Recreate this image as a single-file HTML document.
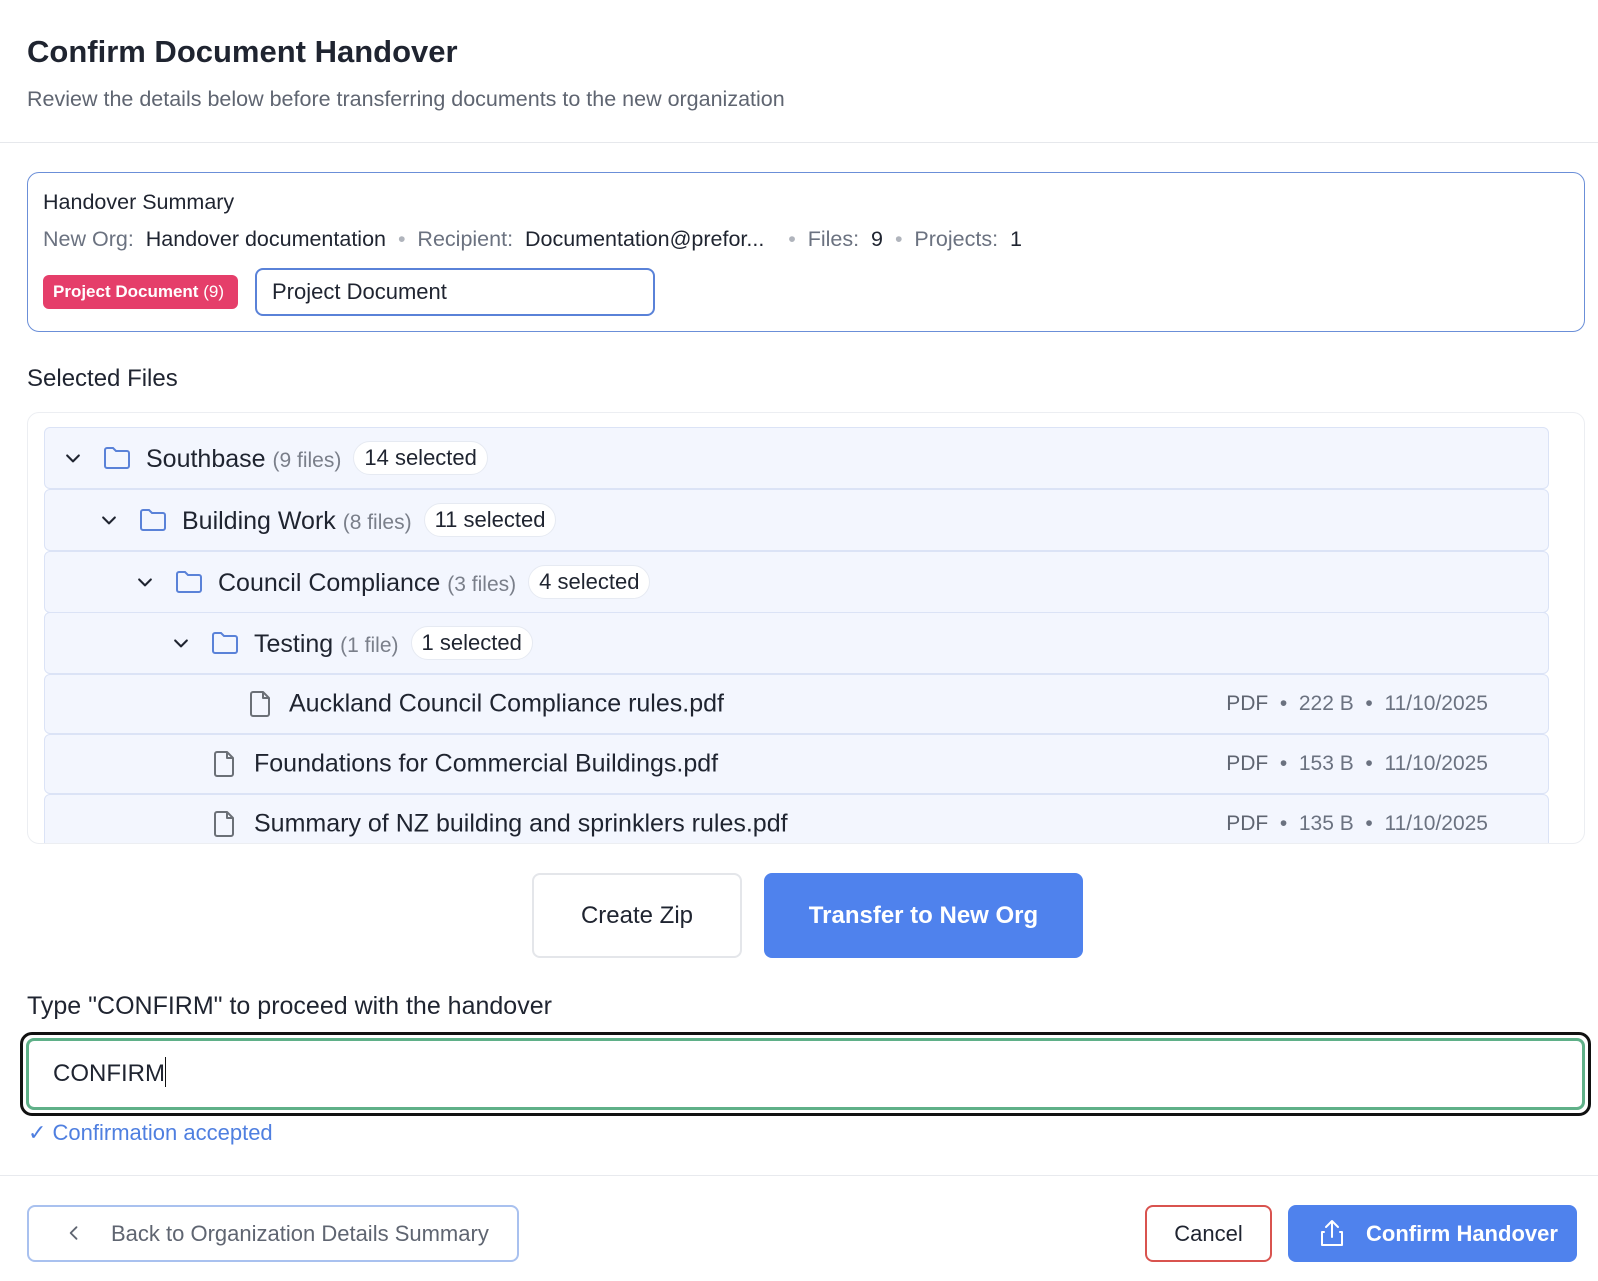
<!DOCTYPE html>
<html><head><meta charset="utf-8"><style>
*{box-sizing:border-box;margin:0;padding:0}
body{width:1598px;height:1281px;background:#fff;font-family:"Liberation Sans",sans-serif;color:#1f2430;position:relative;overflow:hidden}
.a{position:absolute;white-space:nowrap}
.row{position:absolute;left:44px;width:1505px;background:#f3f6fe;border:1px solid #dbe3f6;border-radius:6px}
.row .t{position:absolute;top:50%;transform:translateY(-50%);font-size:25px;white-space:nowrap;color:#1f2430}
.g{color:#7a7f8a;font-size:21px}
.pill{display:inline-block;background:#fff;border:1px solid #e6eaf2;border-radius:18px;padding:3px 10px;font-size:22px;margin-left:12px;color:#1f2430;vertical-align:2px}
.meta{position:absolute;right:60px;top:50%;transform:translateY(-50%);color:#6b7280;font-size:21px}
.ic{position:absolute;top:50%;transform:translateY(-50%)}
</style></head><body>
<div class="a" style="left:27px;top:34px;font-size:31px;font-weight:bold;color:#1f2430">Confirm Document Handover</div>
<div class="a" style="left:27px;top:87px;font-size:21.5px;color:#5f6571">Review the details below before transferring documents to the new organization</div>
<div class="a" style="left:0;top:142px;width:1598px;height:1px;background:#e6e8ec"></div>

<div class="a" style="left:27px;top:172px;width:1558px;height:160px;border:1.5px solid #6b8fd8;border-radius:12px"></div>
<div class="a" style="left:43px;top:190px;font-size:21.5px">Handover Summary</div>
<div class="a" style="left:43px;top:227px;font-size:21.5px;color:#6b7280">New Org:&nbsp; <span style="color:#1f2430">Handover documentation</span> &nbsp;<span style="color:#b0b4bc">•</span>&nbsp; Recipient:&nbsp; <span style="color:#1f2430">Documentation@prefor...</span> &nbsp;&nbsp;&nbsp;<span style="color:#b0b4bc">•</span>&nbsp; Files:&nbsp; <span style="color:#1f2430">9</span> &nbsp;<span style="color:#b0b4bc">•</span>&nbsp; Projects:&nbsp; <span style="color:#1f2430">1</span></div>
<div class="a" style="left:43px;top:275px;width:195px;height:34px;background:#e53e6a;border-radius:6px;color:#fff;font-size:17px;font-weight:bold;line-height:34px;padding-left:10px">Project Document <span style="font-weight:normal">(9)</span></div>
<div class="a" style="left:255px;top:268px;width:400px;height:48px;border:2.5px solid #5a82d8;border-radius:8px;font-size:22px;line-height:43px;padding-left:15px">Project Document</div>

<div class="a" style="left:27px;top:365px;font-size:24px">Selected Files</div>
<div class="a" style="left:27px;top:412px;width:1558px;height:432px;border:1px solid #eceef2;border-radius:12px;overflow:hidden">
</div>
<div class="a" style="left:28px;top:413px;width:1556px;height:430px;overflow:hidden;border-radius:12px">
<div style="position:relative;left:-28px;top:-413px">
<div class="row" style="top:427px;height:62px">
 <svg class="ic" style="left:18px" width="20" height="20" viewBox="0 0 24 24" fill="none" stroke="#1f2430" stroke-width="2.5" stroke-linecap="round" stroke-linejoin="round"><path d="M5 9l7 7 7-7"/></svg>
 <svg class="ic" style="left:58px" width="28" height="24" viewBox="0 0 28 24" fill="none" stroke="#5a82d8" stroke-width="2"><path d="M2 4a2 2 0 0 1 2-2h6l3 3h11a2 2 0 0 1 2 2v13a2 2 0 0 1-2 2H4a2 2 0 0 1-2-2z"/></svg>
 <div class="t" style="left:101px">Southbase <span class="g">(9 files)</span><span class="pill">14 selected</span></div>
</div>
<div class="row" style="top:489px;height:62px">
 <svg class="ic" style="left:54px" width="20" height="20" viewBox="0 0 24 24" fill="none" stroke="#1f2430" stroke-width="2.5" stroke-linecap="round" stroke-linejoin="round"><path d="M5 9l7 7 7-7"/></svg>
 <svg class="ic" style="left:94px" width="28" height="24" viewBox="0 0 28 24" fill="none" stroke="#5a82d8" stroke-width="2"><path d="M2 4a2 2 0 0 1 2-2h6l3 3h11a2 2 0 0 1 2 2v13a2 2 0 0 1-2 2H4a2 2 0 0 1-2-2z"/></svg>
 <div class="t" style="left:137px">Building Work <span class="g">(8 files)</span><span class="pill">11 selected</span></div>
</div>
<div class="row" style="top:551px;height:62px">
 <svg class="ic" style="left:90px" width="20" height="20" viewBox="0 0 24 24" fill="none" stroke="#1f2430" stroke-width="2.5" stroke-linecap="round" stroke-linejoin="round"><path d="M5 9l7 7 7-7"/></svg>
 <svg class="ic" style="left:130px" width="28" height="24" viewBox="0 0 28 24" fill="none" stroke="#5a82d8" stroke-width="2"><path d="M2 4a2 2 0 0 1 2-2h6l3 3h11a2 2 0 0 1 2 2v13a2 2 0 0 1-2 2H4a2 2 0 0 1-2-2z"/></svg>
 <div class="t" style="left:173px">Council Compliance <span class="g">(3 files)</span><span class="pill">4 selected</span></div>
</div>
<div class="row" style="top:612px;height:62px">
 <svg class="ic" style="left:126px" width="20" height="20" viewBox="0 0 24 24" fill="none" stroke="#1f2430" stroke-width="2.5" stroke-linecap="round" stroke-linejoin="round"><path d="M5 9l7 7 7-7"/></svg>
 <svg class="ic" style="left:166px" width="28" height="24" viewBox="0 0 28 24" fill="none" stroke="#5a82d8" stroke-width="2"><path d="M2 4a2 2 0 0 1 2-2h6l3 3h11a2 2 0 0 1 2 2v13a2 2 0 0 1-2 2H4a2 2 0 0 1-2-2z"/></svg>
 <div class="t" style="left:209px">Testing <span class="g">(1 file)</span><span class="pill">1 selected</span></div>
</div>
<div class="row" style="top:674px;height:60px">
 <svg class="ic" style="left:205px" width="22" height="26" viewBox="0 0 22 26" fill="none" stroke="#6b7077" stroke-width="2" stroke-linejoin="round"><path d="M3 1h10l6 6v16a2 2 0 0 1-2 2H3a2 2 0 0 1-2-2V3a2 2 0 0 1 2-2z"/><path d="M13 1v6h6"/></svg>
 <div class="t" style="left:244px">Auckland Council Compliance rules.pdf</div>
 <div class="meta"><b style="font-weight:normal;color:#5f6571">PDF</b> &nbsp;•&nbsp; 222 B &nbsp;•&nbsp; 11/10/2025</div>
</div>
<div class="row" style="top:734px;height:60px">
 <svg class="ic" style="left:169px" width="22" height="26" viewBox="0 0 22 26" fill="none" stroke="#6b7077" stroke-width="2" stroke-linejoin="round"><path d="M3 1h10l6 6v16a2 2 0 0 1-2 2H3a2 2 0 0 1-2-2V3a2 2 0 0 1 2-2z"/><path d="M13 1v6h6"/></svg>
 <div class="t" style="left:209px">Foundations for Commercial Buildings.pdf</div>
 <div class="meta"><b style="font-weight:normal;color:#5f6571">PDF</b> &nbsp;•&nbsp; 153 B &nbsp;•&nbsp; 11/10/2025</div>
</div>
<div class="row" style="top:794px;height:60px">
 <svg class="ic" style="left:169px" width="22" height="26" viewBox="0 0 22 26" fill="none" stroke="#6b7077" stroke-width="2" stroke-linejoin="round"><path d="M3 1h10l6 6v16a2 2 0 0 1-2 2H3a2 2 0 0 1-2-2V3a2 2 0 0 1 2-2z"/><path d="M13 1v6h6"/></svg>
 <div class="t" style="left:209px">Summary of NZ building and sprinklers rules.pdf</div>
 <div class="meta"><b style="font-weight:normal;color:#5f6571">PDF</b> &nbsp;•&nbsp; 135 B &nbsp;•&nbsp; 11/10/2025</div>
</div>
</div></div>

<div class="a" style="left:532px;top:873px;width:210px;height:85px;border:2px solid #e4e6ea;border-radius:8px;font-size:24px;text-align:center;line-height:81px">Create Zip</div>
<div class="a" style="left:764px;top:873px;width:319px;height:85px;background:#4f82ed;border-radius:8px;font-size:24px;font-weight:bold;color:#fff;text-align:center;line-height:85px">Transfer to New Org</div>

<div class="a" style="left:27px;top:992px;font-size:25px">Type "CONFIRM" to proceed with the handover</div>
<div class="a" style="left:20px;top:1032px;width:1571px;height:84px;border:3px solid #111;border-radius:12px"></div>
<div class="a" style="left:26px;top:1038px;width:1559px;height:72px;border:3px solid #5fb088;border-radius:8px;font-size:24px;line-height:66px;padding-left:24px">CONFIRM<span style="display:inline-block;width:1.5px;height:30px;background:#111;vertical-align:-6px"></span></div>
<div class="a" style="left:28px;top:1120px;font-size:22px;color:#4f7fe0">✓ Confirmation accepted</div>
<div class="a" style="left:0;top:1175px;width:1598px;height:1px;background:#e8eaee"></div>

<div class="a" style="left:27px;top:1205px;width:492px;height:57px;border:2px solid #a9c1ef;border-radius:8px;font-size:22px;color:#5f6571;line-height:53px;padding-left:82px">Back to Organization Details Summary</div>
<svg class="a" style="left:64px;top:1223px" width="20" height="20" viewBox="0 0 24 24" fill="none" stroke="#5f6571" stroke-width="2.2" stroke-linecap="round" stroke-linejoin="round"><path d="M15 5l-7 7 7 7"/></svg>
<div class="a" style="left:1145px;top:1205px;width:127px;height:57px;border:2px solid #d9534f;border-radius:8px;font-size:22px;text-align:center;line-height:53px">Cancel</div>
<div class="a" style="left:1288px;top:1205px;width:289px;height:57px;background:#4f82ed;border-radius:8px;font-size:22px;font-weight:bold;color:#fff;line-height:57px;padding-left:78px">Confirm Handover</div>
<svg class="a" style="left:1318px;top:1218px" width="28" height="30" viewBox="0 0 28 30" fill="none" stroke="#fff" stroke-width="2" stroke-linecap="round" stroke-linejoin="round"><path d="M14 19V3M8 9l6-6 6 6"/><path d="M6 14H4v13h20V14h-2"/></svg>
</body></html>
